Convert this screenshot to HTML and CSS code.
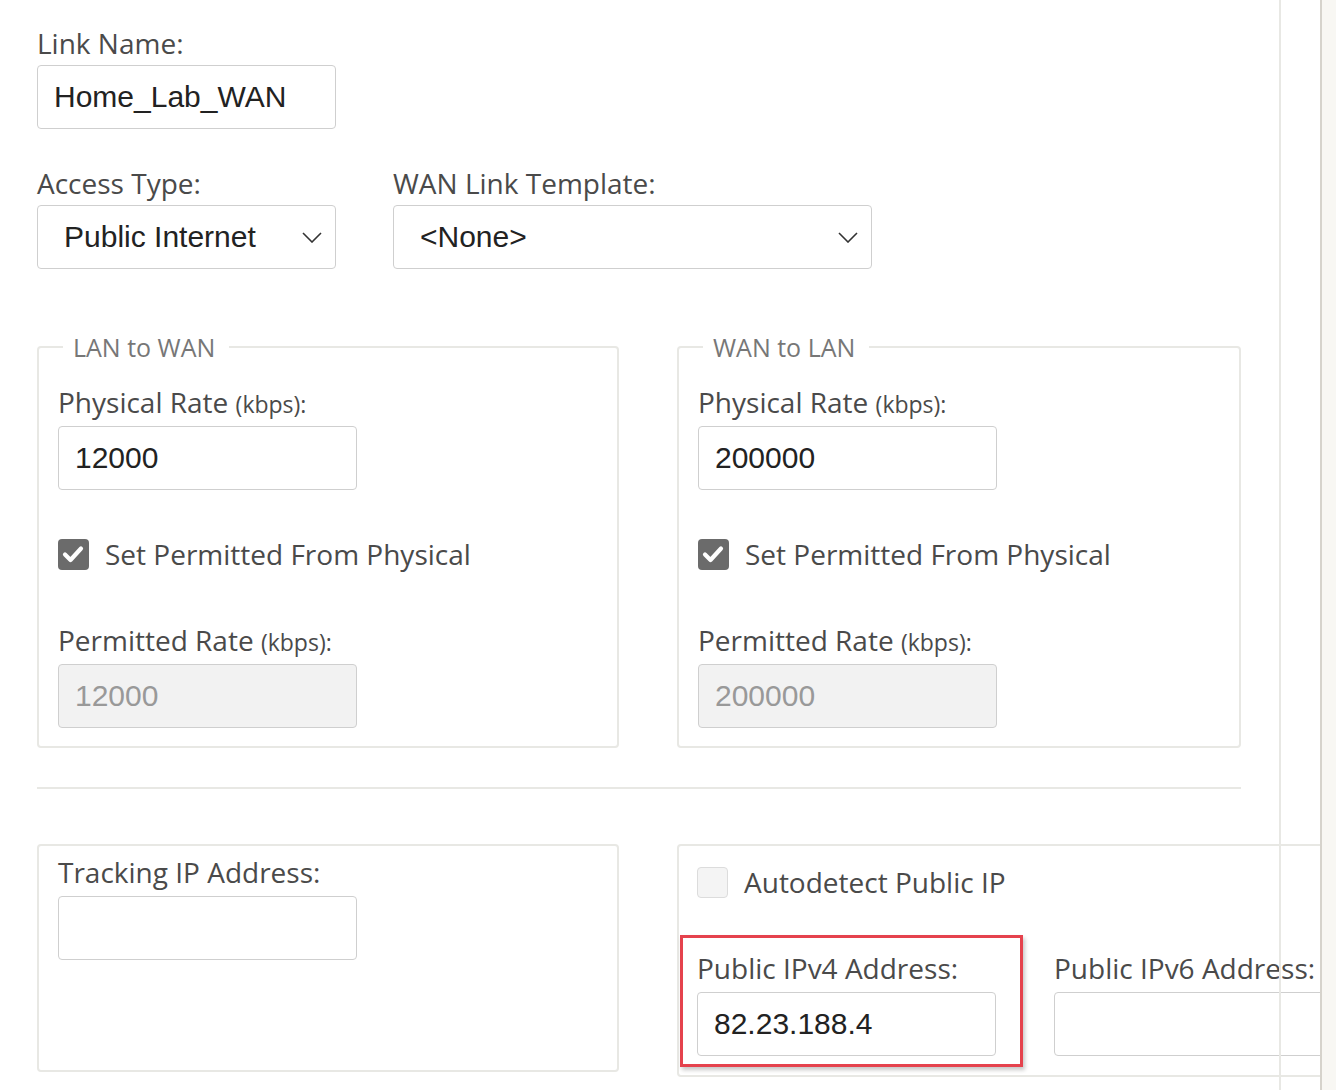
FILE: index.html
```html
<!DOCTYPE html>
<html>
<head>
<meta charset="utf-8">
<link rel="stylesheet" href="styles.css">
</head>
<body>
<div class="page">
  <div class="content">
    <div class="field">
      <label class="lbl">Link Name:</label>
      <div class="input w298">Home_Lab_WAN</div>
    </div>

    <div class="row row-selects">
      <div class="field">
        <label class="lbl">Access Type:</label>
        <div class="select w298"><span>Public Internet</span>
          <svg class="chev" viewBox="0 0 20 11" width="20" height="11"><path d="M1 1 L10 10 L19 1" fill="none" stroke="#333" stroke-width="1.6"/></svg>
        </div>
      </div>
      <div class="field">
        <label class="lbl">WAN Link Template:</label>
        <div class="select w478"><span>&lt;None&gt;</span>
          <svg class="chev" viewBox="0 0 20 11" width="20" height="11"><path d="M1 1 L10 10 L19 1" fill="none" stroke="#333" stroke-width="1.6"/></svg>
        </div>
      </div>
    </div>

    <div class="row row-sets">
      <fieldset class="set set-left">
        <legend>LAN to WAN</legend>
        <label class="lbl">Physical Rate <small>(kbps):</small></label>
        <div class="input w298">12000</div>
        <div class="check-row">
          <span class="cb cb-on"><svg viewBox="0 0 30 30" width="30" height="30"><path d="M7 15.5 L12.5 21 L23 9.5" fill="none" stroke="#fff" stroke-width="4.2" stroke-linecap="round" stroke-linejoin="round"/></svg></span>
          <span class="cb-text">Set Permitted From Physical</span>
        </div>
        <label class="lbl lbl-perm">Permitted Rate <small>(kbps):</small></label>
        <div class="input w298 disabled">12000</div>
      </fieldset>
      <fieldset class="set set-right">
        <legend>WAN to LAN</legend>
        <label class="lbl">Physical Rate <small>(kbps):</small></label>
        <div class="input w298">200000</div>
        <div class="check-row">
          <span class="cb cb-on"><svg viewBox="0 0 30 30" width="30" height="30"><path d="M7 15.5 L12.5 21 L23 9.5" fill="none" stroke="#fff" stroke-width="4.2" stroke-linecap="round" stroke-linejoin="round"/></svg></span>
          <span class="cb-text">Set Permitted From Physical</span>
        </div>
        <label class="lbl lbl-perm">Permitted Rate <small>(kbps):</small></label>
        <div class="input w298 disabled">200000</div>
      </fieldset>
    </div>

    <hr class="sep">

    <div class="row row-bottom">
      <div class="box box-left">
        <label class="lbl">Tracking IP Address:</label>
        <div class="input w298"></div>
      </div>
      <div class="box box-right">
        <div class="check-row check-auto">
          <span class="cb cb-off"></span>
          <span class="cb-text">Autodetect Public IP</span>
        </div>
        <div class="row row-ip">
          <div class="highlight">
            <label class="lbl">Public IPv4 Address:</label>
            <div class="input w298">82.23.188.4</div>
          </div>
          <div class="field field-v6">
            <label class="lbl">Public IPv6 Address:</label>
            <div class="input w298"></div>
          </div>
        </div>
      </div>
    </div>
  </div>
  <div class="guide"></div>
</div>
</body>
</html>
```

FILE: styles.css
```css
html, body {
  margin: 0;
  padding: 0;
}
body {
  background: #f8f7f3;
}
.page {
  position: relative;
  width: 1320px;
  height: 1090px;
  overflow: hidden;
  background: #fff;
  border-right: 2px solid #d6d3cc;
}
.content {
  padding: 25px 0 0 37px;
}
.guide {
  position: absolute;
  left: 1279px;
  top: 0;
  bottom: 0;
  width: 2px;
  background: #e8e8e4;
}
.lbl {
  display: block;
  font-family: "Open Sans", sans-serif;
  font-size: 28px;
  line-height: 36px;
  color: #4a4a4a;
  margin-bottom: 4px;
  white-space: nowrap;
}
.lbl small {
  font-size: 23px;
}
.input, .select {
  box-sizing: border-box;
  height: 64px;
  border: 1px solid #cfcfcf;
  border-radius: 4px;
  background: #fff;
  font-family: "Liberation Sans", Arial, sans-serif;
  font-size: 30px;
  color: #222;
  display: flex;
  align-items: center;
  padding-left: 16px;
  white-space: nowrap;
}
.select {
  padding-left: 26px;
  padding-right: 13px;
  justify-content: space-between;
}
.w298 { width: 299px; }
.w478 { width: 479px; }
.input.disabled {
  background: #f2f2f2;
  color: #999;
}
.row {
  display: flex;
  gap: 58px;
}
.row-selects {
  margin-top: 36px;
  gap: 57px;
}
.row-sets {
  margin-top: 62px;
}
.set {
  margin: 0;
  border: 2px solid #e8e8e4;
  border-radius: 4px;
  padding: 21px 19px 18px 19px;
  box-sizing: border-box;
}
.set-left { width: 582px; }
.set-right { width: 564px; }
.set legend {
  font-family: "Open Sans", sans-serif;
  font-size: 25px;
  line-height: 32px;
  color: #777;
  margin-left: 5px;
  padding: 0 14px 0 10px;
}
.check-row {
  display: flex;
  align-items: center;
  gap: 16px;
  margin-top: 46px;
  height: 36px;
}
.cb {
  box-sizing: border-box;
  width: 31px;
  height: 31px;
  border-radius: 4px;
  display: block;
  flex: none;
}
.cb-on {
  background: #6b6b6b;
}
.cb-on svg { display: block; }
.cb-off {
  background: #f4f4f4;
  border: 1px solid #dcdcdc;
}
.cb-text {
  font-family: "Open Sans", sans-serif;
  font-size: 28px;
  color: #4a4a4a;
  white-space: nowrap;
}
.lbl-perm {
  margin-top: 50px;
}
.sep {
  margin: 39px 0 0 0;
  width: 1204px;
  height: 2px;
  border: 0;
  background: #e8e8e4;
}
.row-bottom {
  margin-top: 55px;
}
.box {
  border: 2px solid #e8e8e4;
  border-radius: 4px;
  box-sizing: border-box;
  flex: none;
}
.box-left {
  width: 582px;
  height: 228px;
  padding: 8px 19px 0 19px;
  align-self: flex-start;
}
.box-left .lbl {
  margin-bottom: 6px;
}
.box-right {
  width: 720px;
  height: 233px;
  padding: 18px 19px 0 18px;
}
.check-auto {
  margin-top: 0;
}
.row-ip {
  margin-top: 35px;
  gap: 0;
  align-items: flex-start;
}
.highlight {
  margin-left: -17px;
  border: 3px solid #e5424d;
  padding: 12px 24px 8px 14px;
  box-shadow: 2px 3px 4px rgba(0, 0, 0, 0.22);
}
.highlight .lbl, .field-v6 .lbl {
  margin-bottom: 6px;
}
.field-v6 {
  margin-left: 31px;
  padding-top: 15px;
}
```
